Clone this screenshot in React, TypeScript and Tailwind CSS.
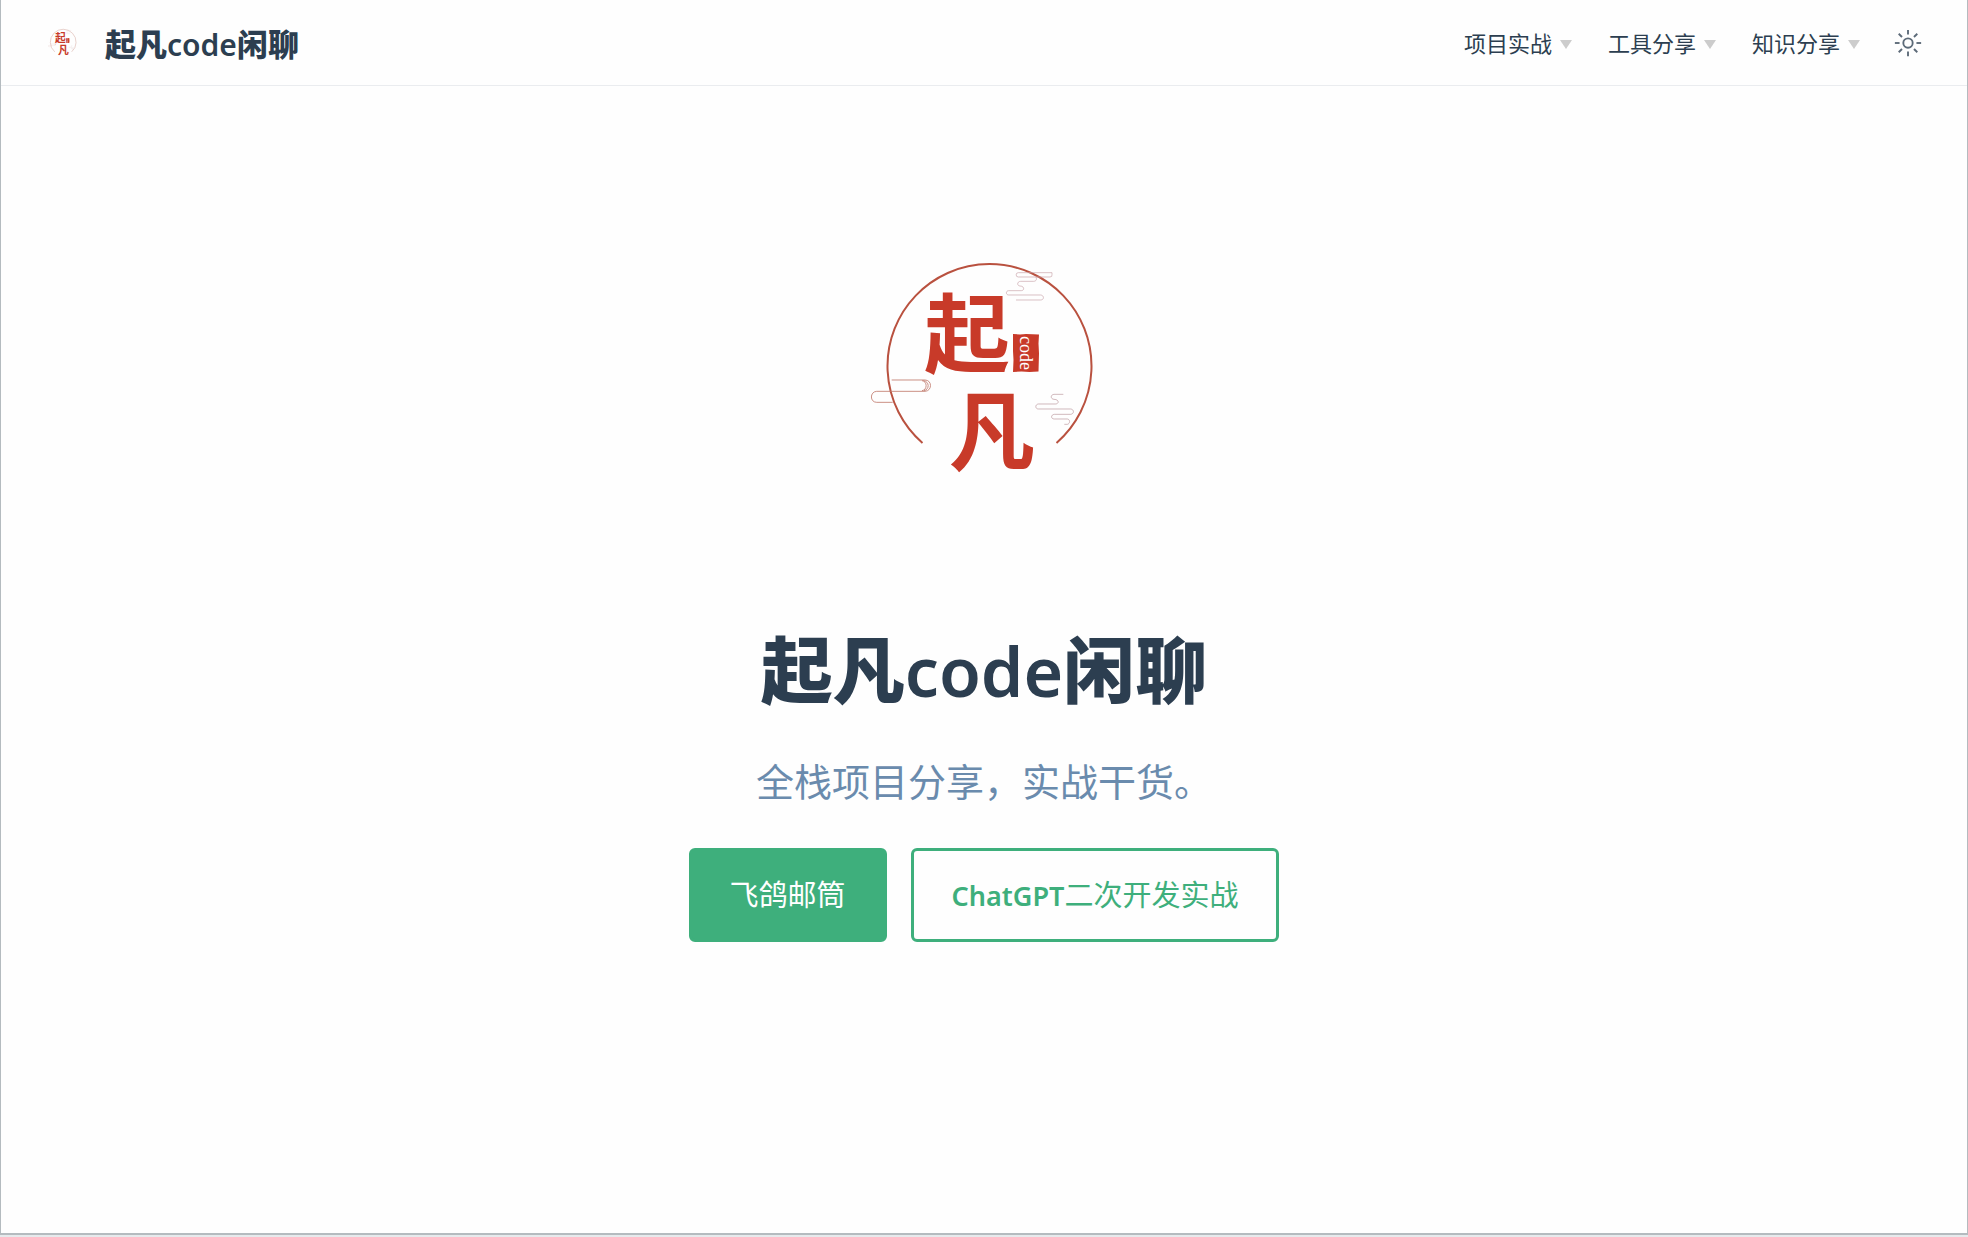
const SANS = "font-['Noto_Sans','Noto_Sans_CJK_SC',sans-serif]";

function Logo({ className, strokeWidth, ringClass }: { className: string; strokeWidth: number; ringClass: string }) {
  return (
    <svg viewBox="0 0 420 420" className={className} role="img" aria-label="起凡code">
      <path d="M148.500 284A102 102 0 1 1 282.500 284" fill="none" className={ringClass} strokeWidth={strokeWidth} />
      <g transform="translate(206 97) scale(.33333)" fill="none" stroke="#c9a3a9" strokeWidth="2">
        <path d="M168 63H115a6.500 6.500 0 0 1 0-13H216V56a6 6 0 0 1-6 7H168C172 73 166 76 160 76H122C111 76 110 89 120 90C134 90 134 104 124 104H86C77 104 77 117 86 117H182C193 118 193 132 182 132H108" />
      </g>
      <g transform="translate(86 92) scale(.33333)" fill="none" stroke="#c0796c" strokeWidth="2.500">
        <path d="M95 387H195C217 387 217 420 195 421H50C29 422 29 454 50 454H98" />
        <path d="M186 389C202 390 203 417 186 419M190 389C209 391 209 416 192 419" />
      </g>
      <g transform="translate(86 92) scale(.33333)" fill="none" stroke="#b9959b" strokeWidth="2">
        <path d="M610 430H582C571 431 571 444 582 445C598 445 598 459 586 459H535C525 460 525 474 535 474H632C643 475 643 489 632 490H583C572 491 572 504 583 504H622C631 505 631 518 622 520H613" />
      </g>
      <g fill="#c83a29" className="font-['Noto_Sans_CJK_SC',sans-serif] font-bold">
        <text x="150" y="207" fontSize="86">起</text>
        <text x="175" y="305" fontSize="86">凡</text>
      </g>
      <path d="M239 175l7 .5 6-.5 13 .5-.5 9 .5 10-.5 18-9 .5-8-.5-8.500.5.5-12-.5-9z" fill="#c83a29" />
      <text transform="translate(246 177) rotate(90)" fontSize="18" fill="#fff" className="font-['Liberation_Serif',serif]">
        code
      </text>
    </svg>
  );
}

function SunIcon() {
  return (
    <svg viewBox="0 0 32 32" className="size-[30px]" fill="currentColor" aria-hidden="true">
      <path d="M16 12.005a4 4 0 1 1-4 4a4.005 4.005 0 0 1 4-4m0-2a6 6 0 1 0 6 6a6 6 0 0 0-6-6z" />
      <path d="M5.394 6.813l1.414-1.415l3.506 3.506L8.900 10.318z" />
      <path d="M2 15.005h5v2H2z" />
      <path d="M5.394 25.197L8.900 21.691l1.414 1.415l-3.506 3.505z" />
      <path d="M15 25.005h2v5h-2z" />
      <path d="M21.687 23.106l1.414-1.415l3.506 3.506l-1.414 1.414z" />
      <path d="M25 15.005h5v2h-5z" />
      <path d="M21.687 8.904l3.506-3.506l1.414 1.415l-3.506 3.505z" />
      <path d="M15 2.005h2v5h-2z" />
    </svg>
  );
}

const menus = ["项目实战", "工具分享", "知识分享"];

function SiteName({ latinSize }: { latinSize: string }) {
  return (
    <>
      <span className="font-black">起凡</span>
      <span className={`${latinSize} font-semibold`}>code</span>
      <span className="font-black">闲聊</span>
    </>
  );
}

export default function App() {
  return (
    <div className={`${SANS} flex min-h-screen flex-col border-b-2 border-[#e6eaec] bg-[#fefefe] text-[#2c3e50]`}>
      <div className="flex grow flex-col border-x border-b-2 border-[#b4bbbf]">
        <header className="flex h-[86px] items-center justify-between border-b border-[#eaecef] pr-11 pl-[35px]">
          <a href="#home" className="flex items-center gap-4">
            <Logo className="size-[53px]" strokeWidth={5} ringClass="stroke-[#dcb8b0]" />
            <span className="pt-1 text-[31px] leading-10">
              <SiteName latinSize="text-[30px]" />
            </span>
          </a>
          <nav className="flex items-center">
            {menus.map((label, i) => (
              <button
                key={label}
                type="button"
                className={`${i === menus.length - 1 ? "mr-[33px]" : "mr-9"} flex items-center gap-2 text-[22px] leading-8`}
              >
                {label}
                <span className="mt-1 border-x-6 border-t-9 border-x-transparent border-t-[#ccc]" />
              </button>
            ))}
            <button type="button" aria-label="切换主题" className="text-[#5c6a78]">
              <SunIcon />
            </button>
          </nav>
        </header>
        <main className="flex flex-col items-center pt-[73px] text-center">
          <Logo className="size-[420px]" strokeWidth={2} ringClass="stroke-[#b9513f]" />
          <h1 className="mt-[45px] text-[72px] leading-[90px]">
            <SiteName latinSize="text-[68px]" />
          </h1>
          <p className="mt-10 text-[38px] leading-[50px] text-[#6a8bad]">全栈项目分享，实战干货。</p>
          <div className="mt-[42px] flex gap-6 text-[29px] leading-[49px]">
            <a href="#mail" className="rounded-md border-3 border-[#3eaf7c] bg-[#3eaf7c] px-[38px] py-[19px] text-white">
              飞鸽邮筒
            </a>
            <a href="#chatgpt" className="rounded-md border-3 border-[#3eaf7c] px-[38px] py-[19px] text-[#3eaf7c]">
              <span className="text-[27px] font-semibold">ChatGPT</span>二次开发实战
            </a>
          </div>
        </main>
      </div>
    </div>
  );
}
